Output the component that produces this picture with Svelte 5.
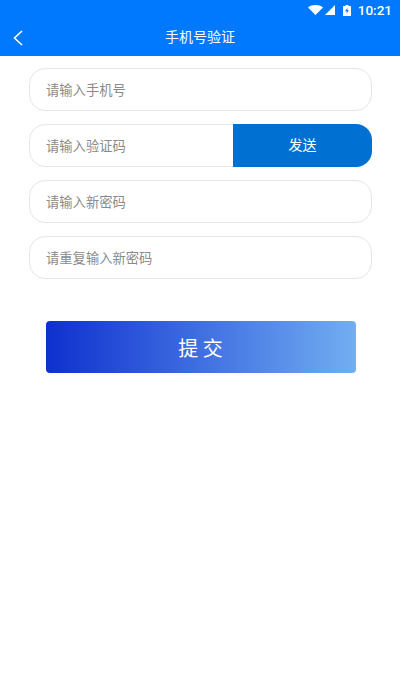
<script lang="ts">
	const fields = [
		{ text: '请输入手机号', send: false },
		{ text: '请输入验证码', send: true },
		{ text: '请输入新密码', send: false },
		{ text: '请重复输入新密码', send: false }
	];
</script>

<div class="page">
	<header>
		<div class="status">
			<svg class="wifi" viewBox="0 0 15 10" width="15" height="10"><path d="M0 2.400C2 .8 4.600 0 7.500 0s5.500 .8 7.500 2.400L7.500 10z" fill="#fff" /></svg>
			<svg class="signal" viewBox="0 0 10 10" width="10" height="10"><path d="M10 0v10H0z" fill="#fff" /></svg>
			<svg class="battery" viewBox="0 0 8 11" width="8" height="11">
				<path fill-rule="evenodd" d="M2.500 0h3v1h2a.5.5 0 0 1 .5.500v9a.5.5 0 0 1-.5.500h-7a.5.5 0 0 1-.5-.500v-9a.5.5 0 0 1 .5-.500h2zM4.500 2.500 2.200 6.200h1.500v2.600l2.100-3.700H4.300z" fill="#fff" />
			</svg>
			<span class="time">10:21</span>
		</div>
		<div class="bar">
			<svg class="back" viewBox="0 0 10 16" width="10" height="16"><path d="M9 1 1.500 8 9 15" fill="none" stroke="#fff" stroke-width="1.600" /></svg>
			<span class="title">手机号验证</span>
		</div>
	</header>

	<main>
		{#each fields as field (field.text)}
			<div class="field">
				<span class="hint">{field.text}</span>
				{#if field.send}
					<button class="send">发送</button>
				{/if}
			</div>
		{/each}
		<button class="submit">提 交</button>
	</main>
</div>

<style>
	:global(body) {
		background: #fff;
	}

	.page {
		width: 400px;
		height: 700px;
		background: #fff;
		font-family: 'Noto Sans CJK SC', 'Liberation Sans', sans-serif;
		overflow: hidden;
	}

	header {
		height: 56px;
		background: #0079fe;
		color: #fff;
	}

	.status {
		height: 20px;
		display: flex;
		align-items: center;
		justify-content: flex-end;
		padding-right: 8px;
	}

	.signal {
		margin-left: 2px;
	}

	.battery {
		margin-left: 8px;
		margin-right: 7px;
	}

	.time {
		font-family: Roboto, sans-serif;
		font-size: 13.5px;
		font-weight: 500;
	}

	.bar {
		height: 32px;
		display: flex;
		align-items: center;
		justify-content: center;
		position: relative;
	}

	.back {
		position: absolute;
		left: 13px;
		top: 10px;
	}

	.title {
		font-size: 14px;
	}

	main {
		padding: 12px 28px 0 29px;
		display: flex;
		flex-direction: column;
		gap: 13px;
	}

	.field {
		height: 43px;
		box-sizing: border-box;
		border: 1px solid #e6e6e6;
		border-radius: 16px;
		display: flex;
		align-items: center;
		justify-content: space-between;
		padding-left: 16px;
		position: relative;
	}

	.hint {
		font-size: 13.3px;
		color: #8a8a8a;
	}

	.send {
		position: absolute;
		right: -1px;
		top: -1px;
		width: 139px;
		height: 43px;
		border: none;
		padding: 0 0 3px;
		background: #0071d3;
		color: #fff;
		font: inherit;
		font-size: 14px;
		border-radius: 0 16px 16px 0;
	}

	.submit {
		margin: 29px 16px 0 17px;
		height: 52px;
		border: none;
		padding: 0 1px 0 0;
		border-radius: 4px;
		background: linear-gradient(90deg, #0e30cf, #72aef2);
		color: #fff;
		font: inherit;
		font-size: 20px;
	}
</style>
